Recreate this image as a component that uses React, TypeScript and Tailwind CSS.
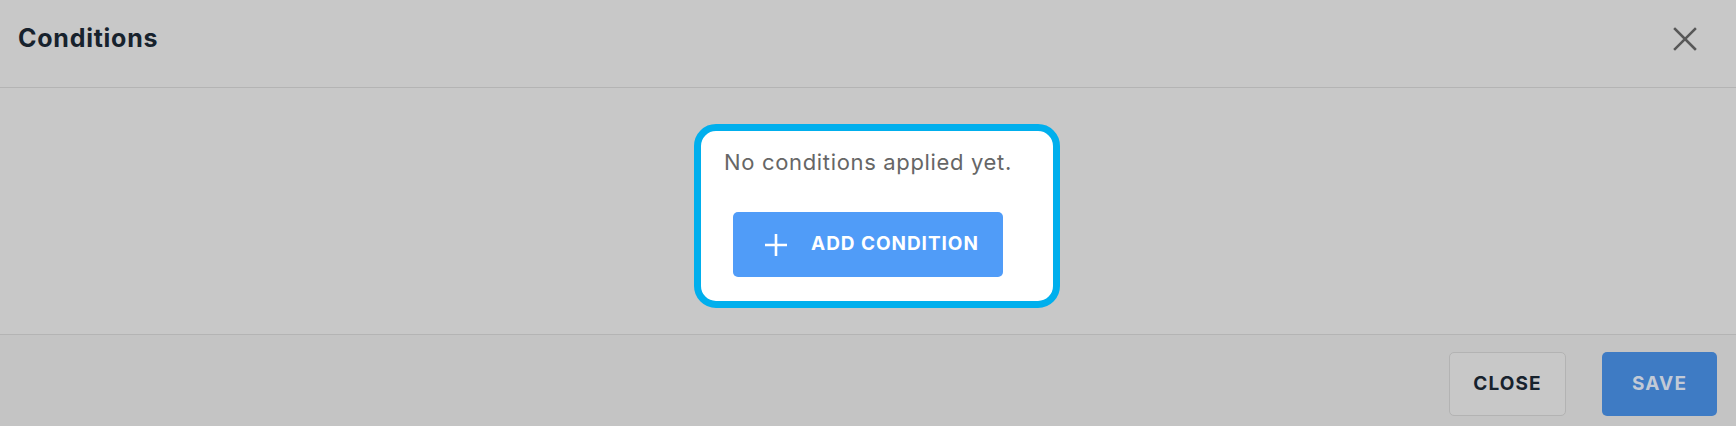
import React from 'react';

const font = { fontFamily: 'Inter, Roboto, "Liberation Sans", sans-serif' };

export default function App() {
  return (
    <div className="w-[1736px] h-[426px] overflow-hidden flex flex-col bg-[#c8c8c8]" style={font}>
      <header className="h-[88px] shrink-0 flex items-center justify-between pl-[18px] pr-[38px] pb-[10px] border-b border-[#b4b4b4]">
        <h2 className="text-[25px] font-bold text-[#17222d] tracking-[0.03em]">Conditions</h2>
        <button className="w-[26px] h-[26px] flex items-center justify-center text-[#585858]">
          <svg width="24" height="24" viewBox="0 0 24 24" fill="none" stroke="currentColor" strokeWidth="2.5" strokeLinecap="square">
            <path d="M2 2 L22 22 M22 2 L2 22" />
          </svg>
        </button>
      </header>

      <main className="h-[246px] shrink-0 flex items-center justify-center pl-[18px] pt-[10px]">
        <div className="w-[366px] h-[184px] rounded-[22px] border-[7px] border-[#00afed] bg-white pt-[15px] pl-[23px]">
          <p className="text-[22px] leading-[32px] text-[#666666] tracking-[0.03em]">No conditions applied yet.</p>
          <button className="mt-[34px] ml-[9px] w-[270px] h-[65px] rounded-[5px] bg-[#509cf8] flex items-center pl-[31px] gap-[23px] text-white">
            <svg width="24" height="24" viewBox="0 0 24 24" fill="none" stroke="currentColor" strokeWidth="2.6">
              <path d="M12 1 V23 M1 12 H23" />
            </svg>
            <span className="text-[19px] font-bold tracking-[0.05em]">ADD CONDITION</span>
          </button>
        </div>
      </main>

      <footer className="flex-1 bg-[#c4c4c4] border-t border-[#b4b4b4] flex justify-end items-start pt-[17px] pr-[19px] gap-[36px]">
        <button className="w-[117px] h-[64px] rounded-[5px] border border-[#b3b3b3] bg-[#c8c8c8] text-[19px] font-bold tracking-[0.06em] text-[#17222d]">
          CLOSE
        </button>
        <button className="w-[115px] h-[64px] rounded-[5px] bg-[#3e7bc4] text-[19px] font-bold tracking-[0.06em] text-[#c2cad6]">
          SAVE
        </button>
      </footer>
    </div>
  );
}
